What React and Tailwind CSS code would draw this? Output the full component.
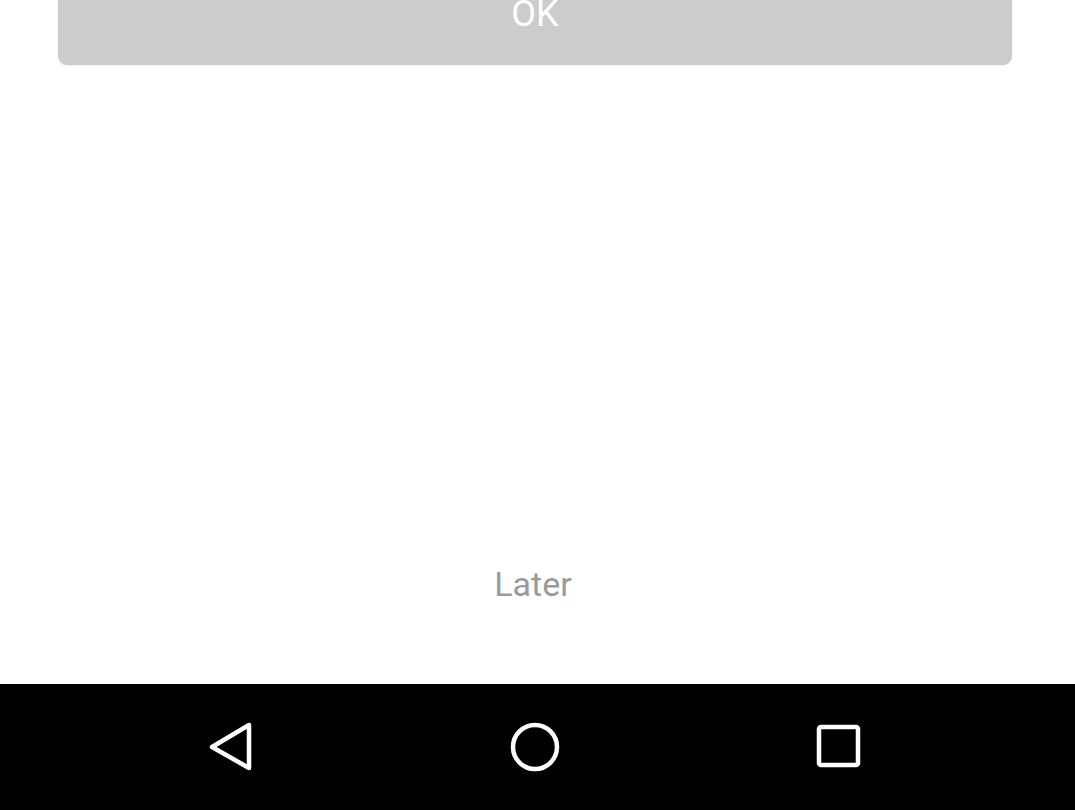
const BackIcon = () => (
    <svg width="48" height="52" viewBox="0 0 48 52" fill="none">
        <path d="M41 4 L41 47 L4 26 Z" stroke="white" strokeWidth="4.5" strokeLinejoin="round" />
    </svg>
)

const HomeIcon = () => (
    <svg width="52" height="52" viewBox="0 0 52 52" fill="none">
        <circle cx="26" cy="26" r="22" stroke="white" strokeWidth="4.5" />
    </svg>
)

const RecentsIcon = () => (
    <svg width="48" height="48" viewBox="0 0 48 48" fill="none">
        <rect x="4" y="4" width="39" height="38" rx="2" stroke="white" strokeWidth="4.5" />
    </svg>
)

const App = () => {
    return (
        <div className="w-[1075px] h-[810px] bg-white flex flex-col overflow-hidden font-['Roboto',sans-serif]">
            <div className="flex-1 flex flex-col pl-[58px] pr-[63px]">
                <button className="mt-[-37px] h-[102px] w-full rounded-[9px] bg-[#cccccc] text-white text-[36px] flex items-center justify-center shadow-[0_1px_2px_rgba(0,0,0,0.08)]">
                    OK
                </button>
                <div className="flex-1" />
                <div className="flex justify-center pb-[80px] pr-[4px]">
                    <span className="text-[34px] leading-[40px] text-[#9a9a9a]">Later</span>
                </div>
            </div>
            <div className="h-[126px] bg-black flex items-center justify-center">
                <div className="w-[300px] flex justify-center pr-[11px]"><BackIcon /></div>
                <div className="w-[300px] flex justify-center pr-[6px]"><HomeIcon /></div>
                <div className="w-[300px] flex justify-center pl-[3px]"><RecentsIcon /></div>
            </div>
        </div>
    )
}

export default App
